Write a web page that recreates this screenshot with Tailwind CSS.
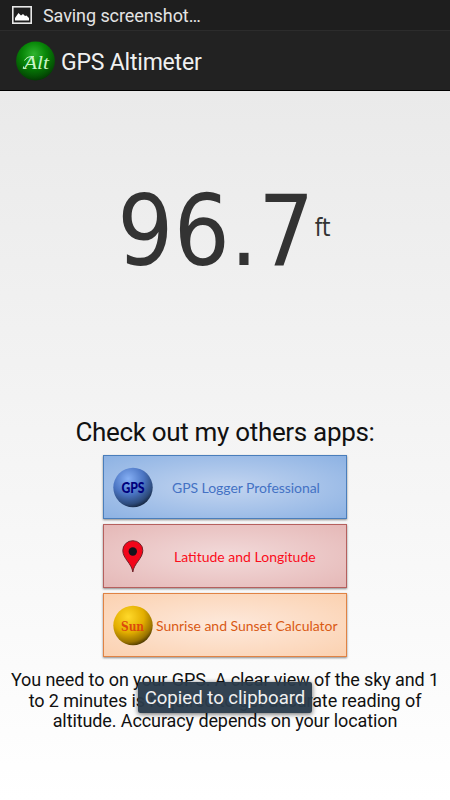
<!DOCTYPE html>
<html lang="en">
<head>
    <meta charset="UTF-8">
    <meta name="viewport" content="width=device-width, initial-scale=1.0">
    <title>GPS Altimeter</title>
    <script src="https://cdn.jsdelivr.net/npm/@tailwindcss/browser@4"></script>
</head>
<body class="w-[450px] h-[800px] overflow-hidden font-['Roboto',sans-serif] text-[#111] bg-white">
    <div class="relative h-full flex flex-col">
        <!-- Status bar -->
        <div class="h-[31px] shrink-0 flex items-center pl-3 bg-[#1e1e1e] border-b border-[#2c2c2c] text-[#e4e4e4]">
            <svg width="20" height="18" viewBox="0 0 20 18" fill="none">
                <rect x="0.8" y="0.8" width="18.4" height="16.4" stroke="#e8e8e8" stroke-width="1.6"/>
                <path d="M3 14.5V12L6.5 7L9 9.5L11 8L13 10L14.5 9.5L17 12V14.5Z" fill="#fff"/>
            </svg>
            <span class="ml-[11px] pt-[2px] text-[18px] leading-[28px] tracking-[-0.08px] whitespace-nowrap">Saving screenshot…</span>
        </div>

        <!-- Action bar -->
        <div class="h-[60px] shrink-0 flex items-center pl-4 bg-[#222] border-b border-black text-[#f0f0f0]">
            <svg width="39" height="40" viewBox="0 0 39 40">
                <defs>
                    <radialGradient id="green" cx="0.46" cy="0.32" r="0.7">
                        <stop offset="0" stop-color="#2fb52f"/>
                        <stop offset="0.45" stop-color="#078507"/>
                        <stop offset="0.8" stop-color="#045604"/>
                        <stop offset="1" stop-color="#033503"/>
                    </radialGradient>
                </defs>
                <circle cx="19.5" cy="20" r="19.4" fill="url(#green)"/>
                <text x="8" y="28" textLength="25" lengthAdjust="spacingAndGlyphs" font-family="Liberation Serif, serif" font-style="italic" font-size="19" fill="#c9f5c9">Alt</text>
                <path d="M7.5 25.5Q6.5 28 9 27.5M8.5 19.5Q11 15 18 15.5" fill="none" stroke="#c9f5c9" stroke-width="1"/>
            </svg>
            <span class="ml-[6px] pt-[5px] text-[23px] tracking-[-0.2px] whitespace-nowrap">GPS Altimeter</span>
        </div>

        <main class="flex-1 flex flex-col items-center bg-linear-to-b from-[#eaeaea] to-white">
            <!-- Reading -->
            <div class="mt-[70px] h-[140px] -ml-[2px] flex items-start text-[#333]">
                <span class="text-[98px] leading-[140px] tracking-[0.3px] font-['DejaVu_Sans_Condensed','DejaVu_Sans',sans-serif] font-stretch-semi-condensed">96.7</span>
                <span class="mt-[51px] text-[24px] leading-[32px] tracking-[0.2px] font-['DejaVu_Sans_Condensed','DejaVu_Sans',sans-serif] font-stretch-semi-condensed">ft</span>
            </div>

            <h1 class="mt-[115px] text-[26px] leading-[32px] tracking-[-0.32px] whitespace-nowrap">Check out my others apps:</h1>

            <!-- Other apps -->
            <div class="mt-[7px] w-[244px] flex flex-col gap-[5px] font-['Lato',sans-serif] text-[14px] tracking-[-0.05px] whitespace-nowrap">
                <a class="h-[64px] flex items-center border border-[#4a7ebb] bg-radial from-[#c3d5f0] to-[#8db2e3] shadow-[0_1px_2px_rgba(0,0,0,0.45)] text-[#4472c4]">
                    <svg class="ml-[9px] shrink-0" width="41" height="41" viewBox="0 0 41 41">
                        <defs>
                            <radialGradient id="blue" cx="0.38" cy="0.28" r="0.8">
                                <stop offset="0" stop-color="#86b0f5"/>
                                <stop offset="0.5" stop-color="#4a74c2"/>
                                <stop offset="0.8" stop-color="#2d4b7c"/>
                                <stop offset="1" stop-color="#0c1626"/>
                            </radialGradient>
                        </defs>
                        <circle cx="20" cy="20.5" r="19.7" fill="url(#blue)"/>
                        <text x="8.5" y="25.5" textLength="23" lengthAdjust="spacingAndGlyphs" font-family="Lato, sans-serif" font-weight="900" font-size="14.5" fill="#00007c">GPS</text>
                    </svg>
                    <span class="ml-[18px] pt-px">GPS Logger Professional</span>
                </a>
                <a class="h-[64px] flex items-center border border-[#b5605e] bg-radial from-[#f2dada] to-[#e5b8b7] shadow-[0_1px_2px_rgba(0,0,0,0.45)] text-[#fb0d1b]">
                    <svg class="ml-[18px] shrink-0" width="23" height="34" viewBox="0 0 23 34">
                        <path d="M10.8 33C9.8 24.5 0.8 19.5 0.8 11.5A10 9.8 0 0 1 20.8 11.5C20.8 19.5 11.8 24.5 10.8 33Z" fill="#f2061a" stroke="#6e2228" stroke-width="1"/>
                        <circle cx="10.8" cy="12.5" r="4.2" fill="#14141c"/>
                    </svg>
                    <span class="ml-[29px] pt-px tracking-normal">Latitude and Longitude</span>
                </a>
                <a class="h-[64px] flex items-center border border-[#e08344] bg-radial from-[#fde9dc] to-[#fbd1b0] shadow-[0_1px_2px_rgba(0,0,0,0.45)] text-[#d95a14]">
                    <svg class="ml-[9px] shrink-0" width="41" height="41" viewBox="0 0 41 41">
                        <defs>
                            <radialGradient id="gold" cx="0.38" cy="0.28" r="0.8">
                                <stop offset="0" stop-color="#ffd92a"/>
                                <stop offset="0.5" stop-color="#e3ae00"/>
                                <stop offset="0.8" stop-color="#9a7300"/>
                                <stop offset="1" stop-color="#2b1e00"/>
                            </radialGradient>
                        </defs>
                        <circle cx="20" cy="20.5" r="19.7" fill="url(#gold)"/>
                        <text x="8" y="25.5" textLength="23" lengthAdjust="spacingAndGlyphs" font-family="DejaVu Serif, serif" font-weight="bold" font-size="13" fill="#dc4a0c">Sun</text>
                    </svg>
                    <span class="ml-[2px] pt-px tracking-[-0.02px]">Sunrise and Sunset Calculator</span>
                </a>
            </div>

            <p class="mt-[13px] text-[18px] leading-[20.5px] tracking-[-0.1px] text-center whitespace-nowrap">
                You need to on your GPS. A clear view of the sky and 1<br>
                to 2 minutes is required to get accurate reading of<br>
                altitude. Accuracy depends on your location
            </p>
        </main>

        <!-- Toast -->
        <div class="absolute left-[138px] top-[682px] w-[174px] h-[31px] pt-[2px] flex items-center justify-center rounded-[2px] bg-[#2b3b4b]/96 shadow-[0_1px_5px_rgba(0,0,0,0.6)] text-[#f0f0f0] text-[18.6px] whitespace-nowrap">Copied to clipboard</div>
    </div>
</body>
</html>
